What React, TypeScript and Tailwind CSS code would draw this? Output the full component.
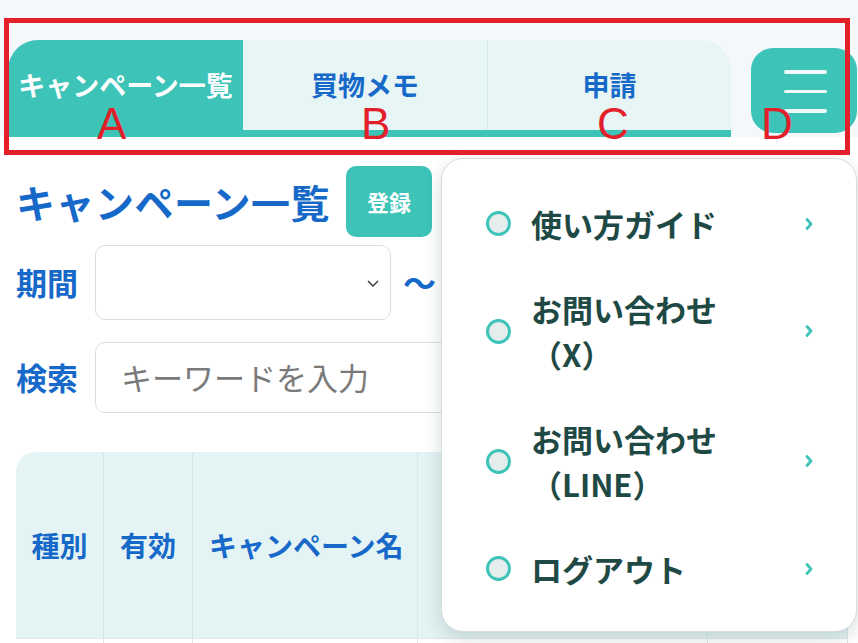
import React from 'react';

const TEAL = 'bg-[#3dc3b8]';

const menuItems = [
  { id: 'guide', lines: ['使い方ガイド'] },
  { id: 'x', lines: ['お問い合わせ', '（X）'] },
  { id: 'line', lines: ['お問い合わせ', '（LINE）'] },
  { id: 'logout', lines: ['ログアウト'] },
];

const tabs = [
  { id: 'a', label: 'キャンペーン一覧', w: 'w-[235px]', active: true },
  { id: 'b', label: '買物メモ', w: 'w-[245px]', active: false },
  { id: 'c', label: '申請', w: 'flex-1', active: false },
];

const columns = [
  { label: '種別', w: 'w-[88px]' },
  { label: '有効', w: 'w-[89px]' },
  { label: 'キャンペーン名', w: 'w-[225px]' },
  { label: '', w: 'w-[290px]' },
  { label: '', w: 'w-[140px]' },
];

const Chevron = () => (
  <svg width="10" height="18" viewBox="0 0 10 18" fill="none">
    <path d="M3 4.5l4 4.5-4 4.5" stroke="#3dc3b8" strokeWidth="2.8" strokeLinecap="round" strokeLinejoin="round" />
  </svg>
);

export default function App() {
  return (
    <div className="relative w-[858px] h-[643px] overflow-hidden bg-white font-['Noto_Sans_CJK_JP','Noto_Sans',sans-serif]">
      {/* Header / tab bar */}
      <header className="flex items-start bg-[#f5f8fb] pt-[40px] pl-[8px] h-[137px]">
        <nav className="flex w-[723px] h-[97px] rounded-t-[30px] bg-[#e8f5f5] border-b-[7px] border-[#3dc3b8]">
          {tabs.map((t) => (
            <div
              key={t.id}
              className={`${t.w} flex items-center justify-center text-[27px] font-bold ${
                t.active
                  ? `${TEAL} text-white rounded-tl-[30px] -mb-[7px] pb-[7px]`
                  : 'text-[#1669c9]'
              } ${t.id === 'b' ? 'border-r border-[#d3e8e8]' : ''} ${t.id === 'c' ? 'rounded-tr-[26px]' : ''}`}
            >
              {t.label}
            </div>
          ))}
        </nav>
        <button className={`ml-[20px] mt-[8px] w-[106px] h-[85px] rounded-[22px] ${TEAL} flex flex-col items-center justify-center gap-[16px] pl-[2px] pt-[2px]`}>
          <span className="block w-[43px] h-[3.5px] rounded-full bg-[#eefaf8]" />
          <span className="block w-[43px] h-[3.5px] rounded-full bg-[#eefaf8]" />
          <span className="block w-[43px] h-[3.5px] rounded-full bg-[#eefaf8]" />
        </button>
      </header>

      {/* Main */}
      <main className="pl-[16px] pt-[29px]">
        <div className="flex items-center gap-[16px]">
          <h1 className="text-[39px] leading-none font-bold text-[#1669c9] tracking-[0.5px]">キャンペーン一覧</h1>
          <button className={`w-[86px] h-[71px] rounded-[10px] ${TEAL} text-white text-[22px] font-bold`}>登録</button>
        </div>

        <div className="flex items-center mt-[8px] h-[75px]">
          <span className="w-[79px] text-[31px] font-bold text-[#1669c9]">期間</span>
          <div className="w-[296px] h-[75px] rounded-[10px] border border-[#d9dddf] bg-white flex items-center justify-end pr-[10px]">
            <svg width="14" height="10" viewBox="0 0 14 10" fill="none">
              <path d="M2 3l5 5 5-5" stroke="#333" strokeWidth="1.4" />
            </svg>
          </div>
          <span className="ml-[12px] text-[33px] font-bold text-[#1669c9]">〜</span>
        </div>

        <div className="flex items-center mt-[22px] h-[71px]">
          <span className="w-[79px] text-[31px] font-bold text-[#1669c9]">検索</span>
          <div className="w-[420px] h-[71px] rounded-[10px] border border-[#d9dddf] bg-white flex items-center pl-[25px] text-[31px] text-[#7a7a7a]">
            キーワードを入力
          </div>
        </div>

        <div className="mt-[39px] flex w-[842px]">
          {columns.map((c, i) => (
            <div key={i} className={`${c.w} shrink-0`}>
              <div
                className={`h-[186px] bg-[#e4f3f4] flex items-center justify-center text-[28px] font-bold text-[#1669c9] border-r border-[#d4e8e9] ${
                  i === 0 ? 'rounded-tl-[20px]' : ''
                } ${i === 2 ? 'justify-start pl-[16px]' : ''}`}
              >
                {c.label}
              </div>
              <div className="h-[40px] border-t border-r border-[#dfe6e7] bg-white" />
            </div>
          ))}
        </div>
      </main>

      {/* Dropdown menu */}
      <div className="absolute left-[441px] top-[158px] w-[416px] h-[474px] rounded-[22px] border border-[#d6dddd] bg-white shadow-[0_6px_18px_rgba(40,70,70,0.18)] pt-[22px] pl-[44px] pr-[42px]">
        {menuItems.map((m) => (
          <div key={m.id} className="flex items-center py-[20px]">
            <span className="w-[25px] h-[25px] rounded-full border-[3px] border-[#3dc3b8] bg-[#e5eded] shrink-0" />
            <div className="ml-[20px] flex-1 text-[31px] leading-[45px] font-bold text-[#1f4944]">
              {m.lines.map((l, i) => (
                <div key={i}>{l}</div>
              ))}
            </div>
            <Chevron />
          </div>
        ))}
      </div>

      {/* Annotation overlay */}
      <div className="absolute left-[4px] top-[18px] w-[846px] h-[137px] border-[5px] border-[#e3202a] pointer-events-none" />
      {[
        { t: 'A', x: 'left-[97px]' },
        { t: 'B', x: 'left-[361px]' },
        { t: 'C', x: 'left-[597px]' },
        { t: 'D', x: 'left-[761px]' },
      ].map((l) => (
        <span
          key={l.t}
          className={`absolute ${l.x} top-[100px] text-[44px] leading-[48px] text-[#e3202a] font-['Liberation_Sans',Arial,sans-serif] pointer-events-none`}
        >
          {l.t}
        </span>
      ))}
    </div>
  );
}
